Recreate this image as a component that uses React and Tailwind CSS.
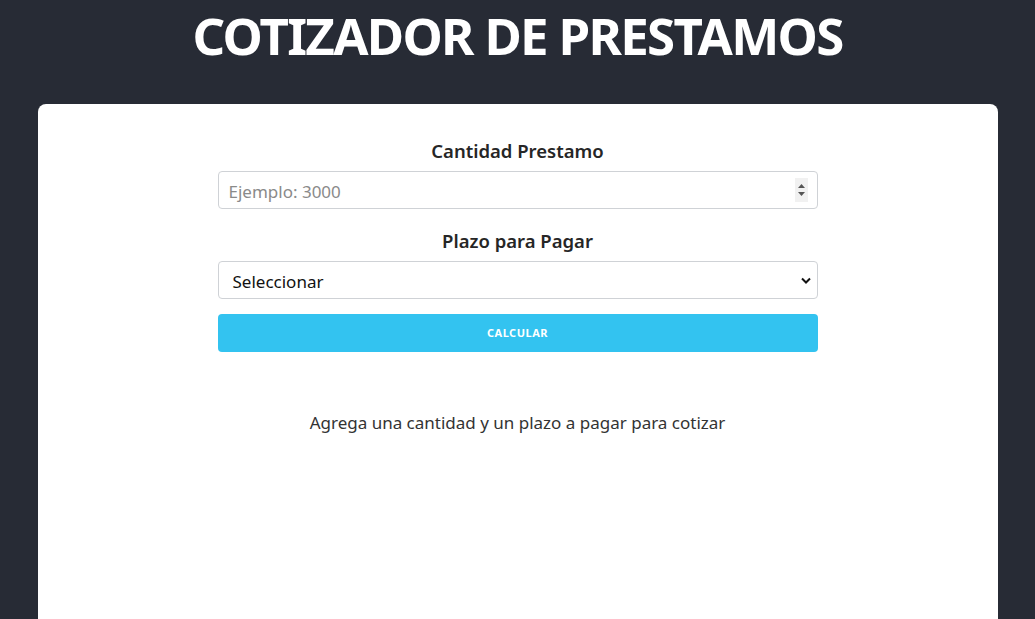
export default function App() {
  return (
    <div
      className="min-h-screen bg-[#272b35]"
      style={{ fontFamily: '"Noto Sans", "Open Sans", sans-serif' }}
    >
      <h1 className="text-center text-white font-bold text-[51px] leading-[70px] tracking-[-1.7px]">
        COTIZADOR DE PRESTAMOS
      </h1>

      <div className="mx-auto mt-[34px] w-[960px] h-[515px] rounded-t-lg bg-white pt-[32px]">
        <form className="mx-auto w-[600px]">
          <div>
            <label className="block text-center text-[18.5px] font-semibold text-[#262626] leading-[30px]">
              Cantidad Prestamo
            </label>
            <div className="mt-[5px] flex h-[38px] items-center rounded-[4px] border border-[#cfd2d6] pl-[10px] pr-[9px]">
              <span className="flex-1 pt-[3px] text-[17px] text-[#8a8a8a]">Ejemplo: 3000</span>
              <div className="flex h-[24px] w-[13px] flex-col items-center justify-center gap-[4px] bg-[#f1f1f1]">
                <svg width="7" height="4" viewBox="0 0 7 4">
                  <path d="M0 4 L3.5 0 L7 4 Z" fill="#555" />
                </svg>
                <svg width="7" height="4" viewBox="0 0 7 4">
                  <path d="M0 0 L3.5 4 L7 0 Z" fill="#555" />
                </svg>
              </div>
            </div>
          </div>

          <div className="mt-[17px]">
            <label className="block text-center text-[18.5px] font-semibold text-[#262626] leading-[30px]">
              Plazo para Pagar
            </label>
            <div className="mt-[5px] flex h-[38px] items-center rounded-[4px] border border-[#cfd2d6] pl-[14px] pr-[6px]">
              <span className="flex-1 pt-[3px] text-[17px] text-[#111]">Seleccionar</span>
              <svg width="10" height="7" viewBox="0 0 10 7">
                <path d="M1 1.5 L5 5.5 L9 1.5" fill="none" stroke="#111" strokeWidth="2" />
              </svg>
            </div>
          </div>

          <button
            type="button"
            className="mt-[15px] flex h-[38px] w-full items-center justify-center rounded-[4px] bg-[#33c3f0] text-[11px] font-bold uppercase tracking-[0.5px] text-white"
          >
            Calcular
          </button>
        </form>

        <p className="mt-[58px] text-center text-[17px] text-[#333]">
          Agrega una cantidad y un plazo a pagar para cotizar
        </p>
      </div>
    </div>
  );
}
